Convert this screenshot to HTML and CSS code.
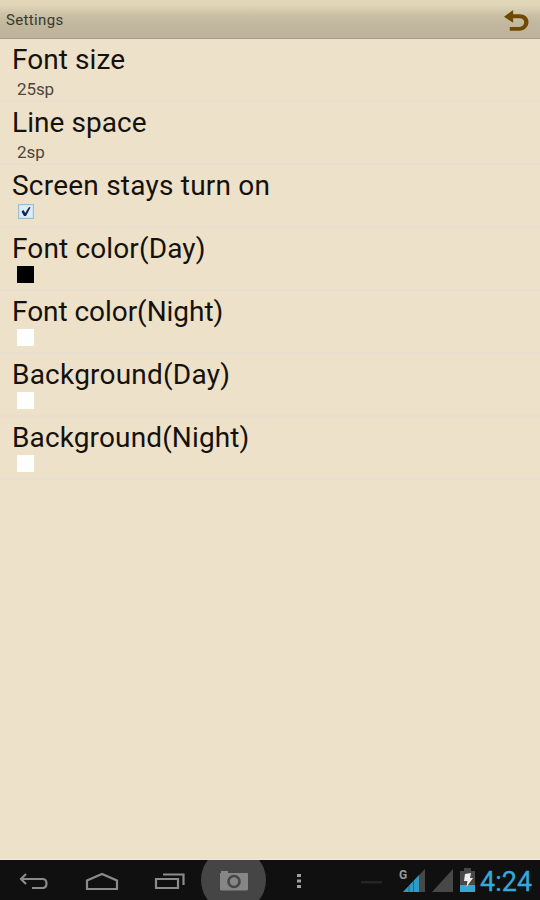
FILE: index.html
```
<!DOCTYPE html>
<html lang="en">
<head>
<meta charset="utf-8">
<title>Settings</title>
<link rel="stylesheet" href="styles.css">
</head>
<body>
<header class="bar">
  <h1 class="bar-title">Settings</h1>
  <svg class="bar-back" width="25" height="22" viewBox="0 0 26 24" preserveAspectRatio="none"><path d="M0 7.3 9.500 0v4.700H16c5.500 0 9.500 3.300 9.500 8.300s-4 9.500-9.500 9.500H6v-4h10c3 0 5-2.300 5-5.300s-2-4.300-5-4.300H9.500V14z"/></svg>
</header>
<main class="list">
  <section class="row"><h2 class="name snug">Font size</h2><p class="value">25sp</p></section>
  <section class="row"><h2 class="name snug">Line space</h2><p class="value">2sp</p></section>
  <section class="row"><h2 class="name wide">Screen stays turn on</h2>
    <svg class="check" width="16" height="16" viewBox="0 0 16 16"><rect x=".5" y=".5" width="15" height="14" fill="#c5e5f8" stroke="#9abed2"/><rect x="2" y="2" width="12" height="11" fill="#d8effb"/><path d="M3.500 7.500 5.500 6l1.700 3L11 3l1.500.5L8 12H6z" fill="#17204f"/></svg>
  </section>
  <section class="row"><h2 class="name">Font color(Day)</h2><div class="swatch black"></div></section>
  <section class="row"><h2 class="name tight">Font color(Night)</h2><div class="swatch"></div></section>
  <section class="row"><h2 class="name wide">Background(Day)</h2><div class="swatch"></div></section>
  <section class="row"><h2 class="name">Background(Night)</h2><div class="swatch"></div></section>
</main>
<footer class="nav">
  <div class="key">
    <svg width="30" height="20" viewBox="0 0 30 20" class="line"><path d="M7 2 2 7l5 5M2 7h21.500q4 0 4 4.500T23.500 16H13"/></svg>
  </div>
  <div class="key">
    <svg width="34" height="20" viewBox="0 0 34 20" class="line"><path d="M2 17V8.500L17 2l15 6.500V17z"/></svg>
  </div>
  <div class="key">
    <svg width="32" height="20" viewBox="0 0 32 20" class="line"><path d="M2 7h22v9H2zM9 2.500h20.500V13"/></svg>
  </div>
  <div class="key camera">
    <svg width="65" height="40" viewBox="0 0 65 40"><circle cx="32.500" cy="20" r="32.500" fill="#454545"/><path d="M19 13h1v-2h7v2h19q1 0 1 1v15q0 1.500-1.500 1.500h-25Q19 30.500 19 29z" fill="#868686"/><circle cx="33" cy="21.500" r="5.500" fill="#868686" stroke="#464646" stroke-width="2.600"/></svg>
  </div>
  <svg class="more" width="4" height="16" viewBox="0 0 4 16"><path d="M0 1h4v3H0zM0 6.500h4v3H0zM0 12h4v3H0z" fill="#a0a0a0"/></svg>
  <div class="status">
    <svg class="dash" width="21" height="3"><rect width="21" height="2.500" fill="#252525"/></svg>
    <svg class="signals" width="79" height="26" viewBox="0 0 79 26">
      <text x="0" y="11.500" class="network">G</text>
      <path d="M4 25 26 2v23z" fill="#484848"/><path d="M4 25 20 8v17z" fill="#2d9bc4"/><path d="M10 19v6M14.500 14v11" stroke="#1e6888"/>
      <path d="M33 25 54 2v23z" fill="#484848"/>
      <path d="M61 4h4V1h7v3h4v21H61z" fill="#484848"/><path d="M61 18h15v7H61z" fill="#38a6d2"/><path d="m66 7 6-1-1 5h3l-6.500 9 1-6H65z" fill="#eee"/>
    </svg>
    <time class="clock">4:24</time>
  </div>
</footer>
</body>
</html>
```
FILE: styles.css
```
* { box-sizing: border-box; }
body {
  margin: 0;
  height: 900px;
  display: flex;
  flex-direction: column;
  overflow: hidden;
  background: #ede1ca;
  color: #15110c;
  font-family: Roboto, sans-serif;
}
h1, h2, p { margin: 0; font-weight: 400; }
.bar {
  height: 39px;
  display: flex;
  align-items: center;
  justify-content: space-between;
  padding: 0 11px 0 6px;
  background: linear-gradient(#e3d9b9 0, #dfd5b8 15%, #c8bfa5 42%, #c0b79e 65%, #bdb49b 100%);
  border-bottom: 1px solid #a99c88;
}
.bar-title { font-size: 15px; letter-spacing: .35px; color: #3c382d; padding-top: 2px; }
.bar-back { fill: #704900; margin-top: 3px; }
.list { flex: 1; }
.row {
  height: 63px;
  padding: 4px 12px 0;
  border-bottom: 2px solid #e8dfd0;
}
.name { font-size: 28px; line-height: 33px; padding-bottom: 2px; letter-spacing: .13px; white-space: nowrap; }
.snug { letter-spacing: .07px; }
.wide { letter-spacing: .22px; }
.tight { letter-spacing: -.05px; }
.value { font-size: 17px; line-height: 22px; padding: 0 0 0 5px; letter-spacing: -.1px; color: #4e463b; }
.check { display: block; margin: 0 0 0 6px; }
.swatch { width: 17px; height: 17px; margin: -1px 0 0 5px; background: #fff; }
.black { background: #000; }
.nav {
  height: 40px;
  flex: none;
  display: flex;
  align-items: center;
  background: #101010;
  box-shadow: 0 -1px #f3edc6;
}
.key { width: 68px; height: 40px; display: flex; align-items: center; justify-content: center; padding-top: 3px; }
.key svg { flex: none; }
.camera { width: 59px; padding: 0; }
.line { fill: none; stroke: #8b8b8b; stroke-width: 2.2; }
.more { margin: 1px 0 0 34px; }
.status { flex: 1; display: flex; align-items: center; padding-left: 60px; }
.dash { flex: none; margin-top: 4px; }
.signals { flex: none; margin-left: 17px; }
.network { font-size: 12px; font-weight: 700; fill: #999; }
.clock { margin: 4px 0 0 2px; font-size: 27px; line-height: 32px; color: #35a9d9; -webkit-text-stroke: .3px #35a9d9; }
```
